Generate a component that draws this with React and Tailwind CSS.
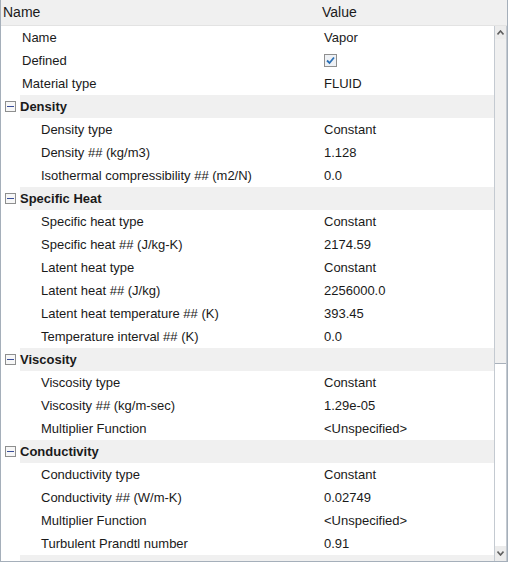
const rows = [
  { label: 'Name', value: 'Vapor' },
  { label: 'Defined', value: 'check' },
  { label: 'Material type', value: 'FLUID' },
  { section: 'Density' },
  { label: 'Density type', value: 'Constant', child: true },
  { label: 'Density ## (kg/m3)', value: '1.128', child: true },
  { label: 'Isothermal compressibility ## (m2/N)', value: '0.0', child: true },
  { section: 'Specific Heat' },
  { label: 'Specific heat type', value: 'Constant', child: true },
  { label: 'Specific heat ## (J/kg-K)', value: '2174.59', child: true },
  { label: 'Latent heat type', value: 'Constant', child: true },
  { label: 'Latent heat ## (J/kg)', value: '2256000.0', child: true },
  { label: 'Latent heat temperature ## (K)', value: '393.45', child: true },
  { label: 'Temperature interval ## (K)', value: '0.0', child: true },
  { section: 'Viscosity' },
  { label: 'Viscosity type', value: 'Constant', child: true },
  { label: 'Viscosity ## (kg/m-sec)', value: '1.29e-05', child: true },
  { label: 'Multiplier Function', value: '<Unspecified>', child: true },
  { section: 'Conductivity' },
  { label: 'Conductivity type', value: 'Constant', child: true },
  { label: 'Conductivity ## (W/m-K)', value: '0.02749', child: true },
  { label: 'Multiplier Function', value: '<Unspecified>', child: true },
  { label: 'Turbulent Prandtl number', value: '0.91', child: true },
  { section: '' },
]

function Checkbox() {
  return (
    <span className="flex h-[13px] w-[13px] items-center justify-center border border-[#8f8f8f] bg-[#eef1f5]">
      <svg width="9" height="9" viewBox="0 0 9 9">
        <path d="M1 4.5 L3.5 7 L8 1.5" fill="none" stroke="#2a6fb5" strokeWidth="1.8" />
      </svg>
    </span>
  )
}

function Collapse() {
  return (
    <span className="flex h-[11px] w-[11px] items-center justify-center border border-[#8e8f8f] bg-[#f7f7f7]">
      <span className="h-px w-[7px] bg-[#3b4f9a]" />
    </span>
  )
}

function Row({ row }) {
  if (row.section !== undefined) {
    return (
      <div className="flex h-[23px] items-center">
        <div className="flex w-[19px] shrink-0 items-center justify-center">
          {row.section && <Collapse />}
        </div>
        <div className="flex h-full flex-1 items-center bg-[#f0f0f0] font-bold">{row.section}</div>
      </div>
    )
  }
  return (
    <div className="flex h-[23px] items-center">
      <div className={`w-[323px] shrink-0 ${row.child ? 'pl-[40px]' : 'pl-[21px]'}`}>{row.label}</div>
      <div className="flex-1">{row.value === 'check' ? <Checkbox /> : row.value}</div>
    </div>
  )
}

export default function App() {
  return (
    <div
      className="flex h-[562px] w-[508px] flex-col overflow-hidden border border-t-0 border-[#a5afba] bg-white text-[13px] text-[#1a1a1a]"
      style={{ fontFamily: '"Liberation Sans", Arial, sans-serif' }}
    >
      <div className="flex h-[26px] shrink-0 items-center border-b border-[#e3e3e3] bg-[#f0f0f0] text-[14px]">
        <div className="w-[321px] pl-[2px]">Name</div>
        <div>Value</div>
      </div>
      <div className="flex min-h-0 flex-1">
        <div className="min-w-0 flex-1 overflow-hidden">
          {rows.map((r, i) => (
            <Row key={i} row={r} />
          ))}
        </div>
        <div className="flex w-[13px] shrink-0 flex-col border-x border-[#c4cad1] bg-white">
          <div className="flex h-[13px] items-center justify-center bg-[#ececec] text-[#555]">
            <svg width="7" height="5" viewBox="0 0 7 5"><path d="M0.5 4.5 L3.5 1 L6.5 4.5" fill="none" stroke="#606060" strokeWidth="1.6" /></svg>
          </div>
          <div className="h-[325px] border-b border-[#a9b1bb] bg-[#f0f0f0]" />
          <div className="flex-1" />
          <div className="flex h-[15px] items-center justify-center bg-[#ececec]">
            <svg width="7" height="5" viewBox="0 0 7 5"><path d="M0.5 0.5 L3.5 4 L6.5 0.5" fill="none" stroke="#606060" strokeWidth="1.6" /></svg>
          </div>
        </div>
      </div>
    </div>
  )
}
